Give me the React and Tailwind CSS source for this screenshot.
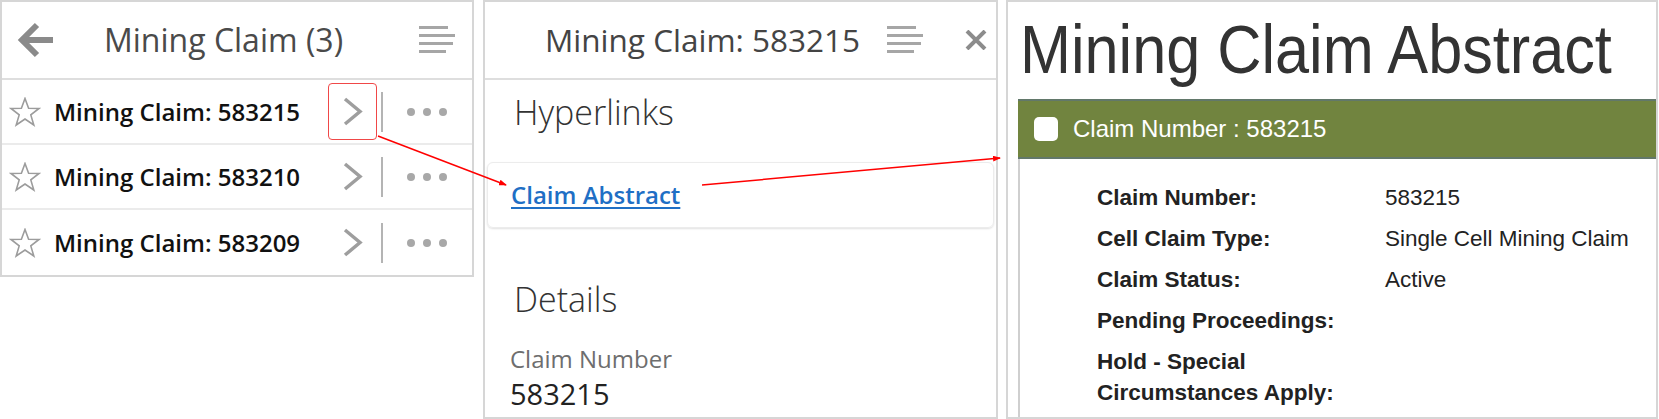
import React from "react";

const ui = "font-['Open_Sans','Noto_Sans',sans-serif]";
const arial = "font-['Liberation_Sans',Arial,sans-serif]";

function BackArrow() {
  return (
    <svg width="37" height="38" viewBox="0 0 37 38">
      <path d="M36 19H7" stroke="#8a8a8a" strokeWidth="6" fill="none" />
      <path d="M20 4L5 19L20 34" stroke="#8a8a8a" strokeWidth="6" fill="none" />
    </svg>
  );
}

function Lines() {
  return (
    <svg width="37" height="28" viewBox="0 0 37 28">
      <rect x="0" y="0" width="29" height="3" fill="#a6a6a6" />
      <rect x="0" y="8" width="36" height="3" fill="#a6a6a6" />
      <rect x="0" y="16" width="34" height="3" fill="#a6a6a6" />
      <rect x="0" y="24" width="27" height="3" fill="#a6a6a6" />
    </svg>
  );
}

function Star() {
  return (
    <svg width="32" height="30" viewBox="0 0 32 30">
      <polygon
        points="16,1.5 19.6,11.2 30,11.5 21.8,17.9 24.8,28 16,22 7.2,28 10.2,17.9 2,11.5 12.4,11.2"
        fill="none"
        stroke="#9c9c9c"
        strokeWidth="1.6"
      />
    </svg>
  );
}

function Chevron() {
  return (
    <svg width="22" height="29" viewBox="0 0 22 29">
      <polyline points="3,2 18,14.5 3,27" fill="none" stroke="#9e9e9e" strokeWidth="3.5" />
    </svg>
  );
}

function Dots() {
  return (
    <svg width="44" height="10" viewBox="0 0 44 10">
      <circle cx="5" cy="5" r="4" fill="#a8a8a8" />
      <circle cx="21" cy="5" r="4" fill="#a8a8a8" />
      <circle cx="37" cy="5" r="4" fill="#a8a8a8" />
    </svg>
  );
}

function CloseX() {
  return (
    <svg width="22" height="20" viewBox="0 0 22 20">
      <path d="M2 1L20 19M20 1L2 19" stroke="#8c8c8c" strokeWidth="4" />
    </svg>
  );
}

const claims = ["583215", "583210", "583209"];

function ClaimList() {
  return (
    <div className={`w-[474px] h-[277px] border-2 border-[#d6d6d6] ${ui}`}>
      <div className="h-[78px] flex items-center border-b-2 border-[#dedede] pl-[15px]">
        <BackArrow />
        <div className="ml-[50px] text-[32px] text-[#4a4a4a] leading-none whitespace-nowrap">
          Mining Claim (3)
        </div>
        <div className="ml-auto mr-[16px]">
          <Lines />
        </div>
      </div>
      {claims.map((n, i) => (
        <div
          key={n}
          className={`h-[65px] flex items-center ${i < 2 ? "border-b-2 border-[#ebebeb]" : ""}`}
        >
          <div className="w-[52px] pl-[7px] flex items-center">
            <Star />
          </div>
          <div className="w-[272px] text-[24px] font-semibold text-[#111] whitespace-nowrap leading-none">
            Mining Claim: {n}
          </div>
          <div
            className={`ml-[2px] w-[49px] h-[57px] flex items-center justify-center rounded-[4px] border-[1.5px] ${
              i === 0 ? "border-[#f04848]" : "border-transparent"
            }`}
          >
            <Chevron />
          </div>
          <div className="ml-[4px] w-[2px] h-[40px] bg-[#b4b4b4]" />
          <div className="flex-1 flex justify-center">
            <Dots />
          </div>
        </div>
      ))}
    </div>
  );
}

function ClaimDetail() {
  return (
    <div className={`ml-[9px] w-[515px] h-[419px] border-2 border-[#d6d6d6] ${ui}`}>
      <div className="h-[78px] flex items-center border-b-2 border-[#dedede] pl-[60px]">
        <div className="text-[31.5px] text-[#444] leading-none whitespace-nowrap">
          Mining Claim: 583215
        </div>
        <div className="ml-[27px]">
          <Lines />
        </div>
        <div className="ml-[41px]">
          <CloseX />
        </div>
      </div>
      <div className="pl-[29px] pt-[15px] text-[34px] font-light text-[#333] leading-none">
        Hyperlinks
      </div>
      <div className="mt-[33px] mx-[2px] h-[66px] flex items-center pl-[23px] border border-[#ececec] rounded-[6px] shadow-[0_1px_2px_rgba(0,0,0,0.12)]">
        <a
          href="#"
          className="text-[24px] font-semibold text-[#1f6fc5] underline decoration-2 underline-offset-[3px] leading-none"
        >
          Claim Abstract
        </a>
      </div>
      <div className="pl-[29px] mt-[54px] text-[34px] font-light text-[#333] leading-none">
        Details
      </div>
      <div className="pl-[25px] mt-[31px] text-[24px] text-[#6e6e6e] leading-none">
        Claim Number
      </div>
      <div className="pl-[25px] mt-[8px] text-[29px] text-[#222] leading-none">
        583215
      </div>
    </div>
  );
}

const rows = [
  ["Claim Number:", "583215"],
  ["Cell Claim Type:", "Single Cell Mining Claim"],
  ["Claim Status:", "Active"],
  ["Pending Proceedings:", ""],
  ["Hold - Special Circumstances Apply:", ""],
];

function Abstract() {
  return (
    <div className={`ml-[8px] w-[652px] h-[419px] border-2 border-[#d6d6d6] overflow-hidden ${arial}`}>
      <div className="h-[97px] pl-[12px] pt-[12px]">
        <div className="text-[68px] leading-[70px] text-[#333] whitespace-nowrap scale-x-[0.9] origin-left">
          Mining Claim Abstract
        </div>
      </div>
      <div className="ml-[10px] border-l-2 border-[#cfcfcf] h-full">
        <div className="h-[60px] -ml-[2px] bg-[#71843f] border-y-2 border-[#62786a] flex items-center pl-[16px]">
          <div className="w-[24px] h-[24px] bg-white rounded-[5px]" />
          <div className="ml-[15px] text-[24px] text-white leading-none">Claim Number : 583215</div>
        </div>
        <div className="pt-[23px] pl-[77px] flex flex-col gap-[10px]">
          {rows.map(([k, v]) => (
            <div key={k} className="flex text-[22.5px] leading-[31px] text-[#222]">
              <div className="w-[288px] font-bold pr-[10px]">{k}</div>
              <div>{v}</div>
            </div>
          ))}
        </div>
      </div>
    </div>
  );
}

export default function App() {
  return (
    <div className="relative w-[1659px] h-[419px] bg-white overflow-hidden flex items-start">
      <ClaimList />
      <ClaimDetail />
      <Abstract />
      <svg className="absolute inset-0 pointer-events-none" width="1659" height="419">
        <defs>
          <marker id="ah" markerWidth="8" markerHeight="6" refX="7" refY="3" orient="auto" markerUnits="userSpaceOnUse">
            <polygon points="0,0 8,3 0,6" fill="#ff0000" />
          </marker>
        </defs>
        <line x1="378" y1="136" x2="506" y2="185" stroke="#ff0000" strokeWidth="1.5" markerEnd="url(#ah)" />
        <line x1="702" y1="185" x2="1000" y2="158" stroke="#ff0000" strokeWidth="1.5" markerEnd="url(#ah)" />
      </svg>
    </div>
  );
}
